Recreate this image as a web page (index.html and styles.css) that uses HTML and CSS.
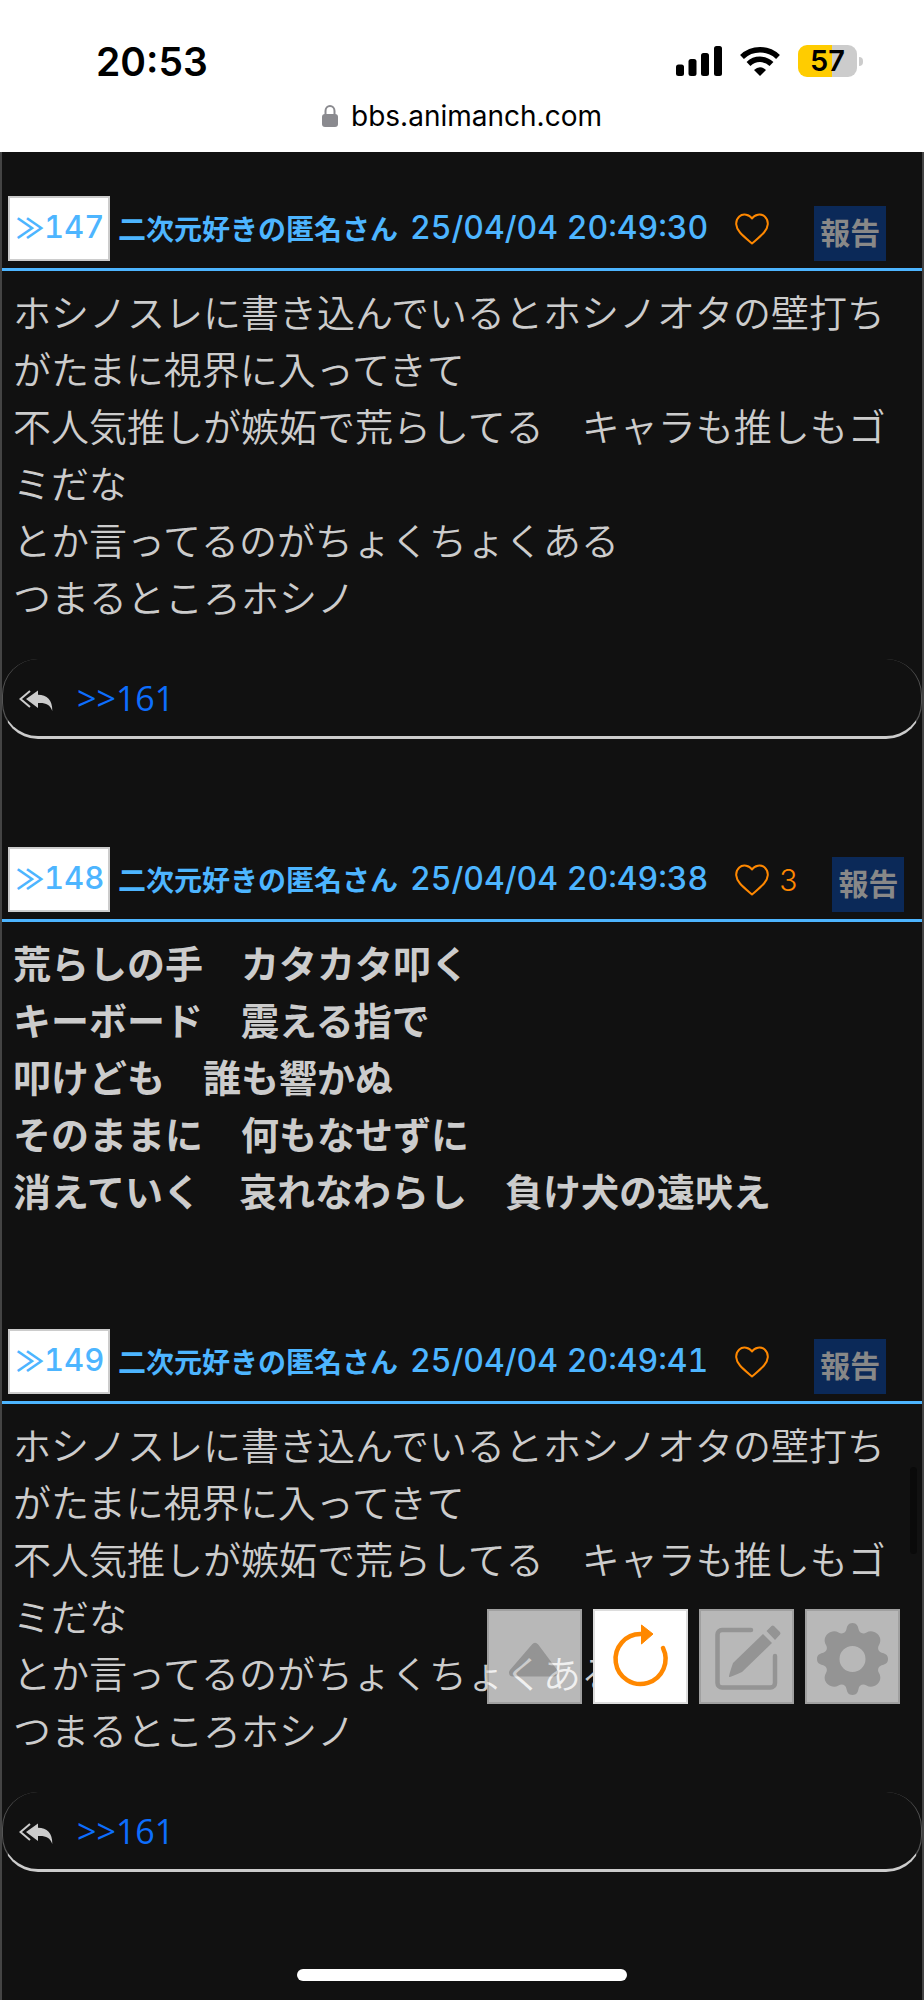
FILE: index.html
```html
<!DOCTYPE html>
<html lang="ja">
<head>
<meta charset="utf-8">
<meta name="viewport" content="width=device-width, initial-scale=1">
<title>bbs.animanch.com</title>
<link rel="stylesheet" href="styles.css">
</head>
<body>
<svg class="sprite" aria-hidden="true">
  <symbol id="heart" viewBox="0 0 34 32">
    <path d="M17 5.500C14.500 1.500 8 .200 4.300 3.400C-.500 7.800.700 14.800 5 19.500C8.500 23.500 13 27 17 30.500C21 27 25.500 23.500 29 19.500C33.300 14.800 34.500 7.800 29.700 3.400C26 .200 19.500 1.500 17 5.500Z" fill="none" stroke="currentColor" stroke-width="2" stroke-linejoin="round"/>
  </symbol>
  <symbol id="replies" viewBox="0 0 34 22">
    <path d="M11 1L1.500 9L11 17" fill="none" stroke="currentColor" stroke-width="2"/>
    <path d="M19 .500L7 9L19 18V13C26 12.500 31 14 33.300 21C33.500 10 28 5 19 4.800Z" fill="currentColor"/>
  </symbol>
</svg>

<header class="browser">
  <div class="status">
    <time class="clock">20:53</time>
    <div class="indicators">
      <svg class="signal" viewBox="0 0 46 30" aria-label="電波">
        <rect x="0" y="18.500" width="8" height="11.500" rx="2.500"/>
        <rect x="12.500" y="13" width="8" height="17" rx="2.500"/>
        <rect x="25" y="7" width="8" height="23" rx="2.500"/>
        <rect x="38" y="0" width="8" height="30" rx="2.500"/>
      </svg>
      <svg class="wifi" viewBox="0 0 40 30" aria-label="Wi-Fi">
        <path d="M2 11A26 26 0 0 1 38 11M8.500 18A16.500 16.500 0 0 1 31.500 18" fill="none" stroke="#000" stroke-width="5.500"/>
        <path d="M20 30L14 24Q20 18.500 26 24Z"/>
      </svg>
      <div class="battery"><span class="level">57</span></div>
    </div>
  </div>
  <div class="address">
    <svg class="lock" viewBox="0 0 16 22" aria-hidden="true">
      <rect x="0" y="9" width="16" height="13" rx="3" fill="#8a8a8f"/>
      <path d="M3.500 10V6A4.500 5 0 0 1 12.500 6V10" fill="none" stroke="#8a8a8f" stroke-width="2"/>
    </svg>
    <span>bbs.animanch.com</span>
  </div>
</header>

<main class="thread">
  <article class="post">
    <header class="post-head">
      <a class="number" href="#p147" id="p147"><span class="mark">≫</span>147</a>
      <span class="meta"><span>二次元好きの匿名さん</span><time class="date">25/04/04 20:49:30</time></span>
      <button class="like" type="button" aria-label="いいね"><svg class="heart"><use href="#heart"/></svg><span></span></button>
      <button class="report" type="button">報告</button>
    </header>
    <p class="text">ホシノスレに書き込んでいるとホシノオタの壁打ちがたまに視界に入ってきて<br>不人気推しが嫉妬で荒らしてる　キャラも推しもゴミだな<br>とか言ってるのがちょくちょくある<br>つまるところホシノ</p>
    <footer class="replies">
      <svg class="replies-icon" aria-hidden="true"><use href="#replies"/></svg>
      <a class="reply-link" href="#p161">&gt;&gt;161</a>
    </footer>
  </article>

  <article class="post">
    <header class="post-head">
      <a class="number" href="#p148" id="p148"><span class="mark">≫</span>148</a>
      <span class="meta"><span>二次元好きの匿名さん</span><time class="date">25/04/04 20:49:38</time></span>
      <button class="like" type="button" aria-label="いいね 3"><svg class="heart"><use href="#heart"/></svg><span>3</span></button>
      <button class="report" type="button">報告</button>
    </header>
    <p class="text popular">荒らしの手　カタカタ叩く<br>キーボード　震える指で<br>叩けども　誰も響かぬ<br>そのままに　何もなせずに<br>消えていく　哀れなわらし　負け犬の遠吠え</p>
  </article>

  <article class="post">
    <header class="post-head">
      <a class="number" href="#p149" id="p149"><span class="mark">≫</span>149</a>
      <span class="meta"><span>二次元好きの匿名さん</span><time class="date">25/04/04 20:49:41</time></span>
      <button class="like" type="button" aria-label="いいね"><svg class="heart"><use href="#heart"/></svg><span></span></button>
      <button class="report" type="button">報告</button>
    </header>
    <p class="text">ホシノスレに書き込んでいるとホシノオタの壁打ちがたまに視界に入ってきて<br>不人気推しが嫉妬で荒らしてる　キャラも推しもゴミだな<br>とか言ってるのがちょくちょくある<br>つまるところホシノ</p>
    <footer class="replies">
      <svg class="replies-icon" aria-hidden="true"><use href="#replies"/></svg>
      <a class="reply-link" href="#p161">&gt;&gt;161</a>
    </footer>
  </article>
</main>

<nav class="tools" aria-label="操作">
  <button class="tool" type="button" aria-label="上へ">
    <svg viewBox="0 0 95 95"><path d="M48 38L67 63.500H26Z" fill="currentColor" stroke="currentColor" stroke-width="8" stroke-linejoin="round"/></svg>
  </button>
  <button class="tool reload" type="button" aria-label="更新">
    <svg viewBox="0 0 95 95">
      <path d="M48 25A25 25 0 1 0 70 39" fill="none" stroke="currentColor" stroke-width="4.500" stroke-linecap="round"/>
      <path d="M48.500 16L60 25L48.500 35Z" fill="currentColor" stroke="currentColor"/>
    </svg>
  </button>
  <button class="tool" type="button" aria-label="書き込む">
    <svg viewBox="0 0 95 95">
      <path d="M52 21H23A4.500 4.500 0 0 0 18.500 25.500V74A4.500 4.500 0 0 0 23 78.500H71.500A4.500 4.500 0 0 0 76 74V47" fill="none" stroke="currentColor" stroke-width="4.500" stroke-linecap="round"/>
      <path d="M30 68Q29.500 67 34 54L64 25L73 34L43 63Q31 68.500 30 68Z" fill="currentColor"/>
      <path d="M67.500 22L72.500 17Q73.500 16 75 17L81 23Q82 24.500 81 25.500L76 31Z" fill="currentColor"/>
    </svg>
  </button>
  <button class="tool" type="button" aria-label="設定">
    <svg viewBox="0 0 95 95">
      <path fill="currentColor" fill-rule="evenodd" d="M47.500 14C51.500 14 53 17 53.500 20C54 24 58 25.500 61.500 23.500C65 21.500 69 22 72.500 25C76 28.500 76 32.500 74 36C72 39.500 73.500 43 77.500 44C80.500 44.700 83 46 83 50C83 54 80.500 55.300 77.500 56C73.500 57 72 60.500 74 64C76 67.500 76 71.500 72.500 75C69 78 65 78.500 61.500 76.500C58 74.500 54 76 53.500 80C53 83 51.500 86 47.500 86C43.500 86 42 83 41.500 80C41 76 37 74.500 33.500 76.500C30 78.500 26 78 22.500 75C19 71.500 19 67.500 21 64C23 60.500 21.500 57 17.500 56C14.500 55.300 12 54 12 50C12 46 14.500 44.700 17.500 44C21.500 43 23 39.500 21 36C19 32.500 19 28.500 22.500 25C26 22 30 21.500 33.500 23.500C37 25.500 41 24 41.500 20C42 17 43.500 14 47.500 14ZM47.500 37A13 13 0 1 0 47.500 63A13 13 0 1 0 47.500 37Z"/>
    </svg>
  </button>
</nav>
<div class="scroll-thumb" aria-hidden="true"></div>
<div class="home-bar" aria-hidden="true"></div>
</body>
</html>
```
FILE: styles.css
```css
* { box-sizing: border-box; }

body {
  margin: 0;
  min-height: 100vh;
  display: flex;
  flex-direction: column;
  background: #111;
  color: #ccc;
  font-family: "Noto Sans CJK JP", sans-serif;
}

button {
  margin: 0;
  padding: 0;
  border: 0;
  background: none;
  color: inherit;
  font: inherit;
  cursor: pointer;
}

a { text-decoration: none; }
svg { display: block; }
.sprite { position: absolute; width: 0; height: 0; }

/* Browser chrome */
.browser {
  height: 152px;
  padding-top: 39px;
  background: #fff;
  color: #000;
  font-family: Inter, sans-serif;
}

.status {
  display: flex;
  justify-content: space-between;
  align-items: center;
  height: 44px;
  padding: 0 61px 0 96px;
}

.clock { font-size: 39px; font-weight: 600; }
.indicators { display: flex; align-items: center; gap: 18px; }
.signal { width: 46px; height: 30px; }
.wifi { width: 40px; height: 30px; }

.battery {
  position: relative;
  width: 59px;
  height: 32px;
  margin-right: 6px;
}

.battery::after {
  content: "";
  position: absolute;
  left: 61px;
  top: 12px;
  width: 4px;
  height: 9px;
  border-radius: 0 4px 4px 0;
  background: #ccc;
}

.level {
  display: block;
  border-radius: 9px;
  background: linear-gradient(90deg, #fc0 57%, #ccc 57%);
  font-size: 29px;
  font-weight: 600;
  line-height: 32px;
  text-align: center;
}

.address {
  display: flex;
  justify-content: center;
  align-items: center;
  gap: 13px;
  height: 66px;
  font-size: 28px;
}

.lock { width: 16px; height: 22px; }

/* Thread */
.thread {
  flex: 1;
  display: flex;
  flex-direction: column;
  gap: 108px;
  padding: 44px 0 60px;
  border: solid #444;
  border-width: 0 2px;
}

.post-head {
  display: flex;
  align-items: flex-end;
  padding: 0 6px 7px;
  border-bottom: 3px solid #4db5ff;
  color: #4db5ff;
}

.number {
  display: flex;
  align-items: center;
  justify-content: space-between;
  width: 102px;
  height: 65px;
  padding: 0 4px 4px 6px;
  border: 2px solid #ccc;
  background: #fff;
  color: #4db5ff;
  font-family: Inter, sans-serif;
  font-size: 31px;
  font-weight: 500;
  font-variant-numeric: tabular-nums;
}

.mark { font-family: "Noto Sans CJK JP", sans-serif; font-size: 28px; font-weight: 700; }

.meta {
  display: flex;
  align-items: center;
  gap: 12px;
  height: 65px;
  padding-bottom: 2px;
  margin-left: 8px;
  font-size: 28px;
  font-weight: 700;
  white-space: nowrap;
}

.date {
  font-family: Inter, sans-serif;
  font-size: 32px;
  font-weight: 500;
  font-variant-numeric: tabular-nums;
}

.like {
  display: flex;
  align-items: center;
  gap: 10px;
  height: 65px;
  margin-left: 27px;
  color: #f80;
  font-family: Inter, sans-serif;
  font-size: 30px;
  font-weight: 300;
}

.heart { width: 34px; height: 32px; }

.report {
  height: 55px;
  margin-left: 35px;
  padding: 0 6px 4px;
  background: #0b2958;
  color: #888;
  font-size: 30px;
  font-weight: 700;
  line-height: 51px;
}

.text {
  margin: 11px 0 0;
  padding: 0 11px;
  font-size: 38px;
  font-weight: 350;
  line-height: 57px;
}

.popular {
  margin-bottom: 3px;
  font-weight: 700;
}

.replies {
  display: flex;
  align-items: center;
  gap: 24px;
  height: 80px;
  margin-top: 35px;
  padding: 0 16px;
  border: solid #555;
  border-width: 0 1px 3px;
  border-bottom-color: #ccc;
  border-radius: 36px;
}

.replies-icon { width: 34px; height: 22px; margin-top: 6px; }

.reply-link {
  color: #0d6efd;
  font-family: "Open Sans", sans-serif;
  font-size: 34px;
  font-weight: 400;
}

/* Floating controls */
.tools {
  position: fixed;
  right: 24px;
  bottom: 296px;
  display: flex;
  gap: 11px;
}

.tool {
  width: 95px;
  height: 95px;
  border: 2px solid #ddd;
  background: #fff;
  color: #ccc;
  opacity: .7;
}

.tool svg { width: 95px; height: 95px; margin: -2px; }
.reload { color: #f80; opacity: 1; }

.scroll-thumb {
  position: fixed;
  right: 7px;
  top: 1467px;
  width: 7px;
  height: 87px;
  border-radius: 4px;
  background: #0a0a0a;
}

.home-bar {
  position: fixed;
  left: 50%;
  bottom: 19px;
  width: 330px;
  height: 12px;
  border-radius: 6px;
  background: #fff;
  transform: translateX(-50%);
}
```
